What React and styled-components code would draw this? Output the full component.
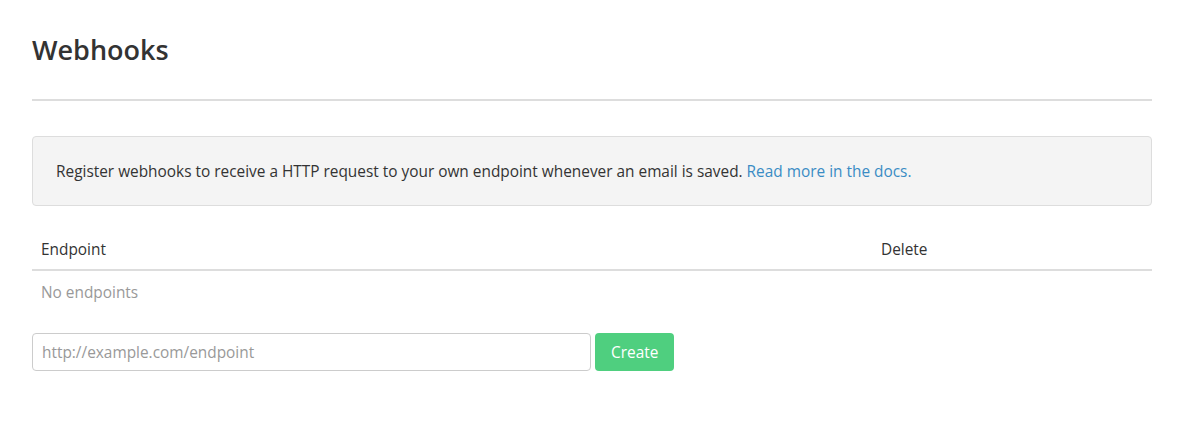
import styled, {createGlobalStyle} from "styled-components";

const GlobalStyle = createGlobalStyle`
    body {
        margin: 0;
        background: #fff;
        font-family: "Open Sans", "Liberation Sans", sans-serif;
        color: #333;
    }
`;

const Page = styled.div`
    padding: 0 48px 0 32px;
`;

const Title = styled.h1`
    margin: 0;
    padding-top: 31px;
    font-size: 27px;
    font-weight: 600;
    line-height: 38px;
    color: #333;
`;

const Rule = styled.hr`
    margin: 30px 0 35px 0;
    border: 0;
    border-top: 2px solid #ddd;
`;

const Well = styled.div`
    background-color: #f4f4f4;
    border: 1px solid #ddd;
    border-radius: 4px;
    padding: 24px 23px 22px 23px;
    font-size: 15.4px;
    line-height: 22px;
`;

const Link = styled.a`
    color: #3a8cc4;
    text-decoration: none;
`;

const Table = styled.table`
    width: 100%;
    margin-top: 25px;
    border-collapse: collapse;
    font-size: 15.4px;
    line-height: 20px;
`;

const HeadCell = styled.th`
    text-align: left;
    font-weight: normal;
    padding: 9px 9px 9px 9px;
    border-bottom: 2px solid #ddd;
    width: ${p => p.$width || "auto"};
`;

const EmptyCell = styled.td`
    padding: 12px 9px 8px 9px;
    color: #999;
`;

const Form = styled.form`
    display: flex;
    gap: 4px;
    margin-top: 22px;
`;

const Input = styled.input`
    width: 559px;
    height: 38px;
    box-sizing: border-box;
    border: 1px solid #ccc;
    border-radius: 4px;
    padding: 0 9px;
    font-family: inherit;
    font-size: 15.4px;
    color: #333;

    &::placeholder {
        color: #999;
    }
`;

const CreateButton = styled.button`
    height: 38px;
    padding: 0 16px;
    border: 0;
    border-radius: 4px;
    background-color: #4fcf7f;
    color: #fff;
    font-family: inherit;
    font-size: 15.4px;
    cursor: pointer;
`;

const App = () => {
    return (
        <Page>
            <GlobalStyle/>
            <Title>Webhooks</Title>
            <Rule/>
            <Well>
                Register webhooks to receive a HTTP request to your own endpoint whenever an email is
                saved. <Link href="#">Read more in the docs.</Link>
            </Well>
            <Table>
                <thead>
                <tr>
                    <HeadCell $width="75%">Endpoint</HeadCell>
                    <HeadCell>Delete</HeadCell>
                </tr>
                </thead>
                <tbody>
                <tr>
                    <EmptyCell colSpan={2}>No endpoints</EmptyCell>
                </tr>
                </tbody>
            </Table>
            <Form onSubmit={e => e.preventDefault()}>
                <Input placeholder="http://example.com/endpoint"/>
                <CreateButton type="submit">Create</CreateButton>
            </Form>
        </Page>
    );
};

export default App;
